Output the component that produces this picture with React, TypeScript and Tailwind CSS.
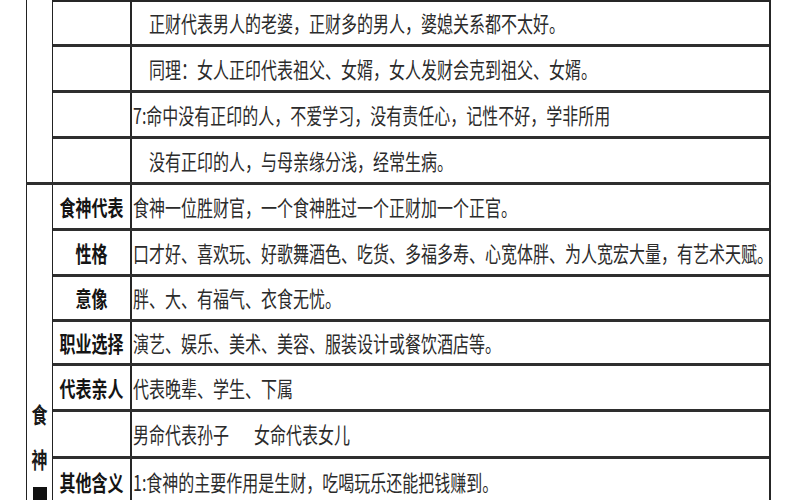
import React from "react";

type Row = {
  label?: string;
  text: string;
  indent?: boolean;
  h: string;
};

// upper block: 正财 / 正印 notes, left column blank
const upperRows: Row[] = [
  { h: "h-[45px]", indent: true, text: "正财代表男人的老婆，正财多的男人，婆媳关系都不太好。" },
  { h: "h-[46px]", indent: true, text: "同理：女人正印代表祖父、女婿，女人发财会克到祖父、女婿。" },
  { h: "h-[46px]", text: "7:命中没有正印的人，不爱学习，没有责任心，记性不好，学非所用" },
  { h: "h-[43px]", indent: true, text: "没有正印的人，与母亲缘分浅，经常生病。" },
];

// lower block: 食神
const lowerRows: Row[] = [
  { h: "h-[46px]", label: "食神代表", text: "食神一位胜财官，一个食神胜过一个正财加一个正官。" },
  { h: "h-[46px]", label: "性格", text: "口才好、喜欢玩、好歌舞酒色、吃货、多福多寿、心宽体胖、为人宽宏大量，有艺术天赋。" },
  { h: "h-[45px]", label: "意像", text: "胖、大、有福气、衣食无忧。" },
  { h: "h-[44px]", label: "职业选择", text: "演艺、娱乐、美术、美容、服装设计或餐饮酒店等。" },
  { h: "h-[46px]", label: "代表亲人", text: "代表晚辈、学生、下属" },
  { h: "h-[47px]", text: "男命代表孙子" },
  { h: "h-[46px]", label: "其他含义", text: "1:食神的主要作用是生财，吃喝玩乐还能把钱赚到。" },
];

function Tall({ children, className }: { children: React.ReactNode; className?: string }) {
  return (
    <span className={"inline-block origin-center scale-y-[1.35] whitespace-nowrap " + (className ?? "")}>
      {children}
    </span>
  );
}

function TableRow({ row, last }: { row: Row; last: boolean }) {
  return (
    <div className={`flex box-border ${row.h} ${last ? "" : "border-b-[3px] border-[#2e2e2e]"}`}>
      <div className="flex w-[77px] shrink-0 items-center justify-center">
        {row.label && <Tall className="text-[16px] font-bold text-[#141414]">{row.label}</Tall>}
      </div>
      <div
        className={`flex flex-1 items-center border-l-2 border-[#262626] text-[16px] text-[#2b2b2b] ${
          row.indent ? "pl-[17px]" : "pl-[1px]"
        }`}
      >
        <Tall>{row.text}</Tall>
        {row.text === "男命代表孙子" && <Tall className="ml-[25px]">女命代表女儿</Tall>}
      </div>
    </div>
  );
}

export default function App() {
  return (
    <div
      className="h-[500px] w-[800px] overflow-hidden bg-white pl-[26px] leading-none"
      style={{ fontFamily: '"Noto Sans CJK SC", "Noto Sans", sans-serif' }}
    >
      {/* upper section */}
      <div className="flex w-[745px] border-b-[3px] border-[#2e2e2e]">
        <div className="w-[27px] shrink-0 border-x border-[#222]" />
        <div className="w-[718px] border-t-2 border-r-2 border-[#262626]">
          {upperRows.map((r, i) => (
            <TableRow key={i} row={r} last={i === upperRows.length - 1} />
          ))}
        </div>
      </div>

      {/* 食神 section */}
      <div className="flex w-[745px]">
        <div className="flex w-[27px] shrink-0 flex-col items-center border-x border-[#222] pt-[221px] text-[16px] font-bold text-[#1a1a1a]">
          <Tall>食</Tall>
          <Tall className="mt-[29px]">神</Tall>
          <div className="mt-[20px] h-[14px] w-[14px] bg-[#111]" />
        </div>
        <div className="w-[718px] border-r-2 border-[#262626]">
          {lowerRows.map((r, i) => (
            <TableRow key={i} row={r} last={i === lowerRows.length - 1} />
          ))}
        </div>
      </div>
    </div>
  );
}
